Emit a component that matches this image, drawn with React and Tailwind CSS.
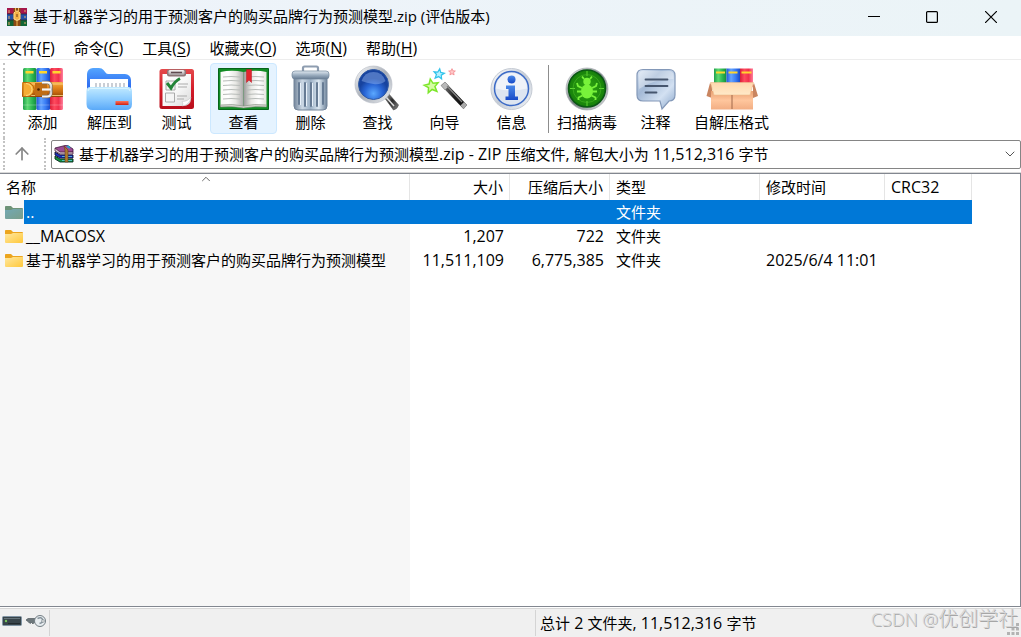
import React from "react";
import { ArrowUp, ChevronDown, ChevronUp } from "lucide-react";

const archive = "基于机器学习的用于预测客户的购买品牌行为预测模型";

// Latin runs are set one pixel larger than the Chinese text beside them.
function Mixed({ children }) {
  return children
    .split(/([\x20-\x7e]+)/)
    .filter(Boolean)
    .map((part, i) =>
      /^[\x20-\x7e]+$/.test(part) ? (
        <span key={i} className="text-[16px]">{part}</span>
      ) : (
        part
      )
    );
}

function Grad({ id, stops, x2 = 0, y2 = 1 }) {
  return (
    <linearGradient id={id} x1="0" y1="0" x2={x2} y2={y2}>
      {stops.map((c, i) => (
        <stop key={i} offset={i / (stops.length - 1)} stopColor={c} />
      ))}
    </linearGradient>
  );
}

function Icon({ children }) {
  return (
    <svg viewBox="0 0 48 44" className="h-11 w-12 overflow-visible" aria-hidden="true">
      {children}
    </svg>
  );
}

const AddIcon = () => (
  <Icon>
    <defs>
      <Grad id="ag" x2={1} y2={0} stops={["#1fa04a", "#5fd873", "#2db853", "#138a3c"]} />
      <Grad id="ab" x2={1} y2={0} stops={["#1f55d8", "#64a4ff", "#3a7df5", "#1a4ac8"]} />
      <Grad id="ap" x2={1} y2={0} stops={["#d81e38", "#ff4a5e", "#f0304c", "#ff7f9c"]} />
      <Grad id="ao" stops={["#f5b04a", "#e58a1f", "#c86a10", "#8e4505"]} />
      <Grad id="as" stops={["#ffffff", "#b8b8b8", "#f2f2f2"]} />
    </defs>
    <rect x="4" y="1" width="13.5" height="42" rx="1.5" fill="url(#ag)" />
    <rect x="17.5" y="1" width="13.5" height="42" rx="1.5" fill="url(#ab)" />
    <rect x="31" y="1" width="13" height="42" rx="1.5" fill="url(#ap)" />
    <path d="M6.5 5.3h8M20 5.3h8M33.5 5.3h8" stroke="#ffd62e" strokeWidth="2.4" />
    <path d="M4 38h13M17.5 38h13M31 38h13" stroke="#fff" strokeOpacity=".25" />
    <rect x="3" y="15" width="41" height="15" rx="1" fill="url(#ao)" />
    <path d="M4 17h40M4 28.500h40" stroke="#ffdc8a" strokeWidth=".8" />
    <path d="M4 15.500h4a7 7 0 0 1 0 14H4z" fill="#f5ad35" stroke="#b8680c" />
    <path d="M7 16.500a6 6 0 0 1 0 12" fill="none" stroke="#ffdc86" />
    <path d="M16 16h12v13H16z" fill="#c06d14" />
    <circle cx="19.500" cy="22.500" r="1.300" fill="#4b2100" />
    <path d="M23 15.500h5q4 0 4 4v6q0 4-4 4h-5" fill="none" stroke="#7f6b57" strokeWidth="3.500" />
    <path d="M23 15.500h5q4 0 4 4v6q0 4-4 4h-5" fill="none" stroke="url(#as)" strokeWidth="2.200" />
    <path d="M23 22.500h9" stroke="#f5f5f5" strokeWidth="2.200" />
  </Icon>
);

const ExtractIcon = () => (
  <Icon>
    <defs>
      <Grad id="eb" stops={["#55a6ff", "#3273f2", "#2862e8"]} />
      <Grad id="ef" stops={["#c2eaff", "#8fcdff", "#5aa9f8"]} />
      <Grad id="er" stops={["#ff7459", "#cf2012"]} />
    </defs>
    <path d="M1 7a6 6 0 0 1 6-6h6q3 0 4.500 2l2 2.500q1 1.500 3 1.500H39a6 6 0 0 1 6 6v20H1z" fill="url(#eb)" />
    <path d="M4 12h38v12H4z" fill="#fff" />
    <path d="M10 20v-4M14 20v-4M18 20v-4M22 20v-4M26 20v-4M30 20v-4M34 20v-4M38 20v-4" stroke="#a7aeb9" strokeWidth="1.200" />
    <path d="M.5 24q0-4 4-4h37.500q4 0 4 4v13q0 6-6 6H6.500q-6 0-6-6z" fill="url(#ef)" />
    <path d="M2 24q0-2.500 3-2.500h36q3 0 3 2.500" fill="none" stroke="#daf5ff" />
    <rect x="29.500" y="34" width="13" height="4" fill="url(#er)" />
  </Icon>
);

const TestIcon = () => (
  <Icon>
    <defs>
      <Grad id="tr" stops={["#e44a4c", "#d41c29", "#b80e1b"]} />
      <Grad id="tp" x2={1} stops={["#ffffff", "#f8f8f8", "#d9d9d9"]} />
      <Grad id="tc" stops={["#faf7f7", "#a2999b"]} />
    </defs>
    <rect x="6.500" y="2" width="34.500" height="40" rx="2.500" fill="url(#tr)" />
    <path d="M9.500 7h28.500v24q0 8-8 8H9.500z" fill="url(#tp)" />
    <path d="M29 34.500q6 0 9-4.500-1 8-9 9 2-2 0-4.500z" fill="#fff" stroke="#bfc0c1" strokeWidth=".5" />
    <rect x="14" y="2.500" width="19" height="7" rx="2" fill="#8c7779" />
    <rect x="15.500" y="3" width="16" height="5" rx="1.500" fill="url(#tc)" />
    <path d="M18 5.500h11" stroke="#604b50" strokeWidth="1.500" />
    <path d="M13 14h9v9h-9zM12.500 26h9v9h-9z" fill="#f5f5f5" stroke="#aaa" />
    <path d="M25 17h10M25 20h9M24 29h10M24 32h7" stroke="#ababab" strokeWidth="1.200" />
    <path d="M14 16l4 5q4-7 9-9.500" fill="none" stroke="#238438" strokeWidth="3" />
  </Icon>
);

const ViewIcon = () => (
  <Icon>
    <defs>
      <Grad id="vl" x2={1} y2={0} stops={["#f9f9f6", "#fff", "#e8e8e4", "#aaa"]} />
      <Grad id="vr" x2={1} y2={0} stops={["#999", "#e8e8e4", "#fff", "#e4e4df"]} />
    </defs>
    <path d="M-1.500 1.500h50v41h-50z" fill="#128c24" stroke="#06651a" />
    <path d="M.5 5Q12 2.500 23.500 5v35Q12 37.500.5 39z" fill="url(#vl)" />
    <path d="M23.500 5Q35 2.500 46.500 5v34Q35 37.500 23.500 40z" fill="url(#vr)" />
    <path d="M.5 38q12-1.500 23 1 11-2.500 23-1v2q-12-1-23 1-11-2-23-1z" fill="#d5d5cf" stroke="#7f887b" strokeWidth=".6" />
    <path d="M3 10q8-1 17 0M3 14q8-1 17 0M3 18.500q8-1 17 0M3 23q8-1 17 0M3 27.500q8-1 17 0M3 32q8-1 17 0M27 10q8-1 17 0M27 14q8-1 17 0M27 18.500q8-1 17 0M27 23q8-1 17 0M27 27.500q8-1 17 0M27 32q8-1 17 0" fill="none" stroke="#b8bcb9" strokeWidth="1.200" />
    <path d="M26.500 2.500h5v13L29 13l-2.500 2.500z" fill="#e2252e" stroke="#ba1422" strokeWidth=".5" />
  </Icon>
);

const DeleteIcon = () => (
  <Icon>
    <defs>
      <Grad id="db" x2={1} y2={0} stops={["#74869b", "#cbd8e5", "#9bb0c5", "#dbe7f1", "#6f849b"]} />
      <Grad id="dl" stops={["#e2eaf1", "#9dafc1", "#667b92"]} />
    </defs>
    <path d="M16 4V1q0-1.500 1.500-1.500h12Q31 -.5 31 1v3" fill="none" stroke="#8e9db0" strokeWidth="2.200" />
    <path d="M7 11h33v28q0 4-4 4H11q-4 0-4-4z" fill="url(#db)" stroke="#738499" />
    <path d="M12 16v21M18 16v23M24 16v23M30 16v23M36 16v21" stroke="#667b94" strokeWidth="2" strokeLinecap="round" />
    <path d="M13.500 16v22M19.500 16v23M25.500 16v23M31.500 16v23" stroke="#e8f1fa" />
    <rect x="5" y="4" width="37" height="8" rx="3" fill="url(#dl)" stroke="#73869c" strokeWidth=".7" />
  </Icon>
);

const FindIcon = () => (
  <Icon>
    <defs>
      <Grad id="fr" x2={1} stops={["#ffffff", "#a7adb6", "#eef1f5"]} />
      <radialGradient id="fl" cy=".8"><stop stopColor="#5ba8ff" /><stop offset=".6" stopColor="#2865d5" /><stop offset="1" stopColor="#17439f" /></radialGradient>
      <Grad id="fh" x2={1} stops={["#bababa", "#282828", "#8a8a8a"]} />
    </defs>
    <path d="M30 30l4-4 10.500 12q-1 4-5 5z" fill="url(#fh)" stroke="#4a4a4a" strokeWidth=".6" />
    <path d="M32 30l8 9" stroke="#e0e0e0" strokeWidth="1.500" />
    <circle cx="19.500" cy="17.500" r="18.500" fill="url(#fr)" stroke="#b3b9c3" strokeWidth=".6" />
    <circle cx="19.500" cy="17.500" r="15" fill="url(#fl)" stroke="#305aa4" />
    <path d="M7.500 14Q10.500 5 19.500 5t12 9q-5 4-12 3t-12-3z" fill="#aacaff" fillOpacity=".38" />
  </Icon>
);

const starPath = "M0-8 2.300-2.700 8-2.300 3.700 1.300 5 7 0 4-5 7-3.700 1.300-8-2.300-2.300-2.700z";
const WizardIcon = () => (
  <Icon>
    <defs><Grad id="wh" x2={1} y2={0} stops={["#888", "#1e1e1e", "#0a0a0a"]} /></defs>
    <path d={starPath} transform="translate(10.5 19) scale(.88) rotate(-10)" fill="#d5fca4" stroke="#7de62b" strokeWidth="1.700" />
    <path d={starPath} transform="translate(18 7) scale(.65) rotate(8)" fill="#b5f1ff" stroke="#32c3ea" strokeWidth="1.900" />
    <path d={starPath} transform="translate(31 5) scale(.42)" fill="#ffc8c8" stroke="#f48a90" strokeWidth="2" />
    <path d="M20 18.500l4-3.500L46 38l-3.500 4z" fill="url(#wh)" />
    <path d="M20 18.500l4-3.500 4 4-4 4z" fill="#b9b9b9" stroke="#777" strokeWidth=".5" />
    <path d="M39.500 38.500l3.500-3.500 3 3-3.500 4z" fill="#aaa" />
    <path d="M26 19l15 16" stroke="#888" strokeWidth="1.200" />
  </Icon>
);

const InfoIcon = () => (
  <Icon>
    <defs>
      <Grad id="ir" x2={1} stops={["#fff", "#c4cbd5", "#f3f6fa"]} />
      <Grad id="ii" stops={["#4a88e8", "#174ac8"]} />
    </defs>
    <circle cx="23.500" cy="22" r="20.500" fill="url(#ir)" stroke="#c5cbd4" />
    <circle cx="23.500" cy="21.500" r="17" fill="#dde5f1" stroke="#3b6ac6" strokeWidth="1.500" />
    <path d="M8 21.500a15.500 15.500 0 0 1 31 0q-15 4-31 0z" fill="#fff" fillOpacity=".55" />
    <circle cx="23.500" cy="12.500" r="4" fill="url(#ii)" />
    <path d="M18 18.500h9v11h3V33H17.500v-3.500h3V22H18z" fill="url(#ii)" />
  </Icon>
);

const ScanIcon = () => (
  <Icon>
    <defs>
      <Grad id="sr" x2={1} stops={["#f8f8f8", "#777e83", "#e5e7e9"]} />
      <radialGradient id="sg"><stop stopColor="#32a914" /><stop offset="1" stopColor="#16800a" /></radialGradient>
    </defs>
    <circle cx="24" cy="22" r="21" fill="url(#sr)" stroke="#a5aaaf" strokeWidth=".7" />
    <circle cx="24" cy="21.500" r="18.500" fill="url(#sg)" stroke="#0b5715" strokeWidth="1.600" />
    <path d="M24 4v5M24 34v5M7 21.500h5M36 21.500h5" stroke="#67df39" strokeWidth=".9" />
    <circle cx="24" cy="21.500" r="14" fill="none" stroke="#49b926" strokeWidth=".6" />
    <ellipse cx="24" cy="24.500" rx="6" ry="7" fill="#78f23a" />
    <circle cx="24" cy="14.500" r="3.700" fill="#78f23a" />
    <path d="M21 12l-2-2.500M27 12l2-2.500M19 21l-4-2-1-3M29 21l4-2 1-3M18.500 24.500H14M29.500 24.500H34M19.500 28.500l-4 2v2.500M28.500 28.500l4 2v2.500" fill="none" stroke="#78f23a" strokeWidth="1.800" />
  </Icon>
);

const CommentIcon = () => (
  <Icon>
    <defs><Grad id="cb" x2={1} stops={["#dfe9f6", "#a3b9d6", "#d3e1f2", "#8aa6ca"]} /></defs>
    <path d="M11 2.500h26q6 0 6 6V28q0 6-6 6l-7 8-2-8H11q-6 0-6-6V8.500q0-6 6-6z" fill="url(#cb)" stroke="#8398b8" strokeWidth="1.200" />
    <path d="M11 4h26q4.500 0 4.500 5v3Q23 11.500 7 22V9q0-5 4-5z" fill="#fff" fillOpacity=".3" />
    <path d="M13.500 12.500h22M13.500 19h22M13.500 25.500h11" stroke="#46566e" strokeWidth="1.800" strokeLinecap="round" />
  </Icon>
);

const SfxIcon = () => (
  <Icon>
    <defs>
      <Grad id="xf" stops={["#ffd8ad", "#ffe9c8"]} />
      <Grad id="xb" stops={["#e9a071", "#ffc69d", "#f2ae83"]} />
    </defs>
    <path d="M6 1.500h12.500V20H6z" fill="url(#ag)" />
    <path d="M18.500 1.500H32V20H18.500z" fill="url(#ab)" />
    <path d="M32 1.500h13V20H32z" fill="url(#ap)" />
    <path d="M8 5.500h9M20.500 5.500h9M33.500 5.500h10" stroke="#ffd52e" strokeWidth="2.200" />
    <path d="M2 16l-3.500 13L4 31V18zM46 16l4 13-5 2V18z" fill="#c98560" />
    <path d="M3 24h42v18.500H3z" fill="url(#xb)" />
    <path d="M2.500 15.500h43L42 28H6z" fill="url(#xf)" stroke="#edbd8d" strokeWidth=".6" />
    <path d="M24 28v14" stroke="#a0694a" />
  </Icon>
);

// Stack of three books; the strap distinguishes the application icon.
const BooksIcon = ({ strap }) => (
  <svg viewBox="0 0 20 18" className="h-[18px] w-5 shrink-0" aria-hidden="true">
    {strap ? (
      <>
        <path d="M0 0h20v6H0z" fill="#a5164c" />
        <path d="M0 6h20v6H0z" fill="#2450a5" />
        <path d="M0 12h20v6H0z" fill="#126535" />
        <path d="M0 6h20M0 12h20" stroke="#28243a" strokeWidth=".8" />
        <path d="M2 2v3M2 8v3M2 14v3M18 2v2M18 8v2M18 14v2" stroke="#e7ad69" />
        <path d="M6.500 0h7v18h-7z" fill="#8a4a16" />
        <path d="M7 5q3-4 6 0v6q-3 3-6 0z" fill="#f3b348" stroke="#ffdb8e" />
        <path d="M8.500 0v4M11.500 0v4M10 13v5" stroke="#f0b752" />
        <path d="M10 6v3" stroke="#713b11" />
      </>
    ) : (
      <>
        <path d="M1 3l12-3 6 4v3L6 8z" fill="#9c4b93" stroke="#3c173f" strokeWidth=".8" />
        <path d="M1 3l5 4h13v2H6L1 6z" fill="#ded3dc" stroke="#4e1d3c" strokeWidth=".8" />
        <path d="M1 7l5 3h13v3H6L1 10z" fill="#1d2ec0" stroke="#101434" strokeWidth=".9" />
        <path d="M1 11l5 3h13v3H6L1 14z" fill="#12943d" stroke="#08261e" strokeWidth=".9" />
        <path d="M8 11.500h10M8 15.500h10" stroke="#63cbe0" strokeWidth=".8" />
        <path d="M10 1l4 4v12h-3V5z" fill="#b07a2e" stroke="#5a3610" strokeWidth=".5" />
        <path d="M13 1l3 2" stroke="#23a4ce" strokeWidth="2" />
      </>
    )}
  </svg>
);

const Folder = ({ selected }) => (
  <svg viewBox="0 0 18 15" className="h-[15px] w-[18px] shrink-0" aria-hidden="true">
    <defs>
      <Grad id="fy" x2={1} stops={["#ffe8a0", "#ffc83b"]} />
      <Grad id="fs" x2={1} stops={["#72a8b4", "#7a9f8a"]} />
    </defs>
    <path d="M0 1.500Q0 1 1 1h5l2 2h9q1 0 1 1v9H0z" fill={selected ? "#6d9277" : "#eca51d"} />
    <path d="M0 5h6l2-1h10v9q0 1-1 1H1q-1 0-1-1z" fill={selected ? "url(#fs)" : "url(#fy)"} />
  </svg>
);

const menus = [["文件", "F"], ["命令", "C"], ["工具", "S"], ["收藏夹", "O"], ["选项", "N"], ["帮助", "H"]];

const tools = [
  ["添加", AddIcon], ["解压到", ExtractIcon], ["测试", TestIcon], ["查看", ViewIcon],
  ["删除", DeleteIcon], ["查找", FindIcon], ["向导", WizardIcon], ["信息", InfoIcon],
];
const extraTools = [["扫描病毒", ScanIcon], ["注释", CommentIcon], ["自解压格式", SfxIcon]];

const rows = [
  { name: "..", size: "", packed: "", type: "文件夹", time: "", selected: true },
  { name: "__MACOSX", size: "1,207", packed: "722", type: "文件夹", time: "" },
  { name: archive, size: "11,511,109", packed: "6,775,385", type: "文件夹", time: "2025/6/4 11:01" },
];

function ToolButton({ label, Drawing, active }) {
  return (
    <button
      type="button"
      className={`flex h-[71px] min-w-[67px] shrink-0 flex-col items-center gap-px border px-1 pt-[3px] ${
        active ? "rounded-sm border-[#cce8ff] bg-[#e5f3ff]" : "border-transparent"
      }`}
    >
      <Drawing />
      <span className="whitespace-nowrap leading-5">{label}</span>
    </button>
  );
}

const head = "h-[26px] border-r border-[#e5e5e5] px-1.5 font-normal";

export default function App() {
  return (
    <div className="flex h-screen flex-col overflow-hidden bg-white font-['Open_Sans','Noto_Sans_CJK_SC',sans-serif] text-[15px] leading-5 text-black">
      <header className="flex h-9 shrink-0 items-center bg-linear-to-r from-[#eef3fa] to-[#ebf4f7] pb-0.5 pl-[7px]">
        <BooksIcon strap />
        <h1 className="ml-1.5 flex-1 truncate pb-0.5">{archive}.zip (评估版本)</h1>
        <div className="flex h-full">
          <button type="button" aria-label="最小化" className="flex w-[58px] items-center justify-center">
            <svg viewBox="0 0 12 12" className="size-3"><path d="M0 5.500h12" stroke="#000" /></svg>
          </button>
          <button type="button" aria-label="最大化" className="flex w-[58px] items-center justify-center">
            <svg viewBox="0 0 12 12" className="size-3"><rect x=".6" y=".6" width="10.800" height="10.800" rx="1" fill="none" stroke="#000" strokeWidth="1.200" /></svg>
          </button>
          <button type="button" aria-label="关闭" className="flex w-[60px] items-center justify-center">
            <svg viewBox="0 0 12 12" className="size-3"><path d="M0 0l12 12M12 0L0 12" stroke="#000" strokeWidth="1.200" /></svg>
          </button>
        </div>
      </header>

      <nav className="flex h-6 shrink-0 items-center gap-[19px] border-b border-[#ededed] px-[7px]">
        {menus.map(([label, key]) => (
          <button type="button" key={key} className="whitespace-nowrap">
            {label}<span className="text-[16px]">(<span className="underline underline-offset-2">{key}</span>)</span>
          </button>
        ))}
      </nav>

      <div className="flex h-[78px] shrink-0 items-start pl-[3px] pt-[3px]">
        <div className="h-[75px] w-1.5 shrink-0 border-l-2 border-dotted border-[#c3c3c3]" />
        {tools.map(([label, Drawing]) => (
          <ToolButton key={label} label={label} Drawing={Drawing} active={label === "查看"} />
        ))}
        <div className="mx-[3px] mt-0.5 h-[68px] w-px shrink-0 bg-[#8d8d8d]" />
        {extraTools.map(([label, Drawing]) => (
          <ToolButton key={label} label={label} Drawing={Drawing} />
        ))}
      </div>

      <div className="flex h-[35px] shrink-0 items-center border-b border-[#d9d9d9] pb-0.5 pl-[3px]">
        <div className="h-8 w-2 border-l-2 border-dotted border-[#c3c3c3]" />
        <button type="button" aria-label="上一级" className="flex w-[33px] items-center pl-px">
          <ArrowUp className="size-5 text-[#858585]" strokeWidth={2} />
        </button>
        <div className="h-8 w-[7px] border-l-2 border-dotted border-[#c3c3c3]" />
        <button type="button" aria-label="当前位置" className="flex h-[29px] min-w-0 flex-1 items-center rounded-xs border border-[#858585] pl-0.5 pr-0.5 text-left">
          <BooksIcon />
          <span className="ml-[5px] flex-1 truncate"><Mixed>{`${archive}.zip - ZIP 压缩文件, 解包大小为 11,512,316 字节`}</Mixed></span>
          <ChevronDown className="size-4 text-[#555]" strokeWidth={1.5} />
        </button>
      </div>

      <main className="flex min-h-0 flex-1 flex-col border-y border-r border-[#828790]">
        <table className="w-[972px] table-fixed border-separate border-spacing-0">
          <colgroup>
            <col className="w-[410px]" />
            <col className="w-[100px]" />
            <col className="w-[100px]" />
            <col className="w-[150px]" />
            <col className="w-[125px]" />
            <col className="w-[87px]" />
          </colgroup>
          <thead>
            <tr>
              <th className={`${head} relative text-left`} aria-sort="ascending">
                名称
                <ChevronUp className="absolute left-[199px] -top-0.5 size-3.5 text-[#555]" strokeWidth={1.5} />
              </th>
              <th className={`${head} text-right`}>大小</th>
              <th className={`${head} text-right`}>压缩后大小</th>
              <th className={`${head} text-left`}>类型</th>
              <th className={`${head} text-left`}>修改时间</th>
              <th className={`${head} text-left`}><Mixed>CRC32</Mixed></th>
            </tr>
          </thead>
          <tbody>
            {rows.map((r) => (
              <tr key={r.name} className={r.selected ? "bg-[#0078d7] text-white" : ""}>
                <td className={`h-6 p-0 ${r.selected ? "" : "bg-[#f7f7f7]"}`}>
                  <div className="flex h-6 items-center">
                    <span className="flex h-6 w-6 shrink-0 items-center bg-[#f7f7f7] pl-[5px]"><Folder selected={r.selected} /></span>
                    <span className="truncate pl-0.5"><Mixed>{r.name}</Mixed></span>
                  </div>
                </td>
                <td className="p-0 pr-1.5 text-right"><Mixed>{r.size}</Mixed></td>
                <td className="p-0 pr-1.5 text-right"><Mixed>{r.packed}</Mixed></td>
                <td className="p-0 pl-1.5">{r.type}</td>
                <td className="whitespace-nowrap p-0 pl-1.5"><Mixed>{r.time}</Mixed></td>
                <td />
              </tr>
            ))}
          </tbody>
        </table>
        <div className="w-[410px] flex-1 bg-[#f7f7f7]" />
      </main>

      <footer className="relative mt-px flex h-[29px] shrink-0 items-center border-t border-[#d7d7d7] bg-[#f0f0f0]">
        <div className="flex h-[26px] w-[50px] shrink-0 items-center gap-1 border-r border-[#d4d4d4] pb-1 pl-0.5">
          <svg viewBox="0 0 20 10" className="h-2.5 w-5" aria-hidden="true">
            <rect x=".5" y=".5" width="19" height="9" rx="1" fill="#38444a" stroke="#8195a5" />
            <path d="M2 2.500h16" stroke="#65737a" />
            <circle cx="4" cy="5" r="1.200" fill="#78c65b" />
            <path d="M6 7.500h12" stroke="#222a2e" />
          </svg>
          <svg viewBox="0 0 20 12" className="h-3 w-5" aria-hidden="true">
            <path d="M0 5l2-1.500h9v4H8L7 9 5.500 7.500 4 8.500 2.500 7z" fill="#6d777b" stroke="#424b50" strokeWidth=".6" />
            <circle cx="14" cy="6" r="5.500" fill="#e8edf0" stroke="#727d83" />
            <path d="M11.500 3.500q4-2 5 1t-3 4" fill="none" stroke="#87949c" strokeWidth="1.500" />
            <circle cx="17" cy="6" r="1.300" fill="#fff" stroke="#647076" strokeWidth=".6" />
          </svg>
        </div>
        <div className="flex-1" />
        <div className="flex h-[26px] w-[486px] shrink-0 items-center border-l border-[#d4d4d4] pl-1">
          <span className="flex-1"><Mixed>总计 2 文件夹, 11,512,316 字节</Mixed></span>
        </div>
        <svg viewBox="0 0 12 12" className="absolute bottom-0.5 right-0.5 size-3" aria-hidden="true">
          <path d="M9 0h3v3H9zM4.500 4.500h3v3h-3zM9 4.500h3v3H9zM0 9h3v3H0zM4.500 9h3v3h-3zM9 9h3v3H9z" fill="#b3b3b3" />
        </svg>
        <span className="absolute bottom-2 right-[3px] whitespace-nowrap text-[20px] font-light text-[#d6d6d6] [text-shadow:1px_1px_0_#a6a6a6]">
          <span className="text-[18px]">CSDN @</span>优创学社
        </span>
      </footer>
    </div>
  );
}
